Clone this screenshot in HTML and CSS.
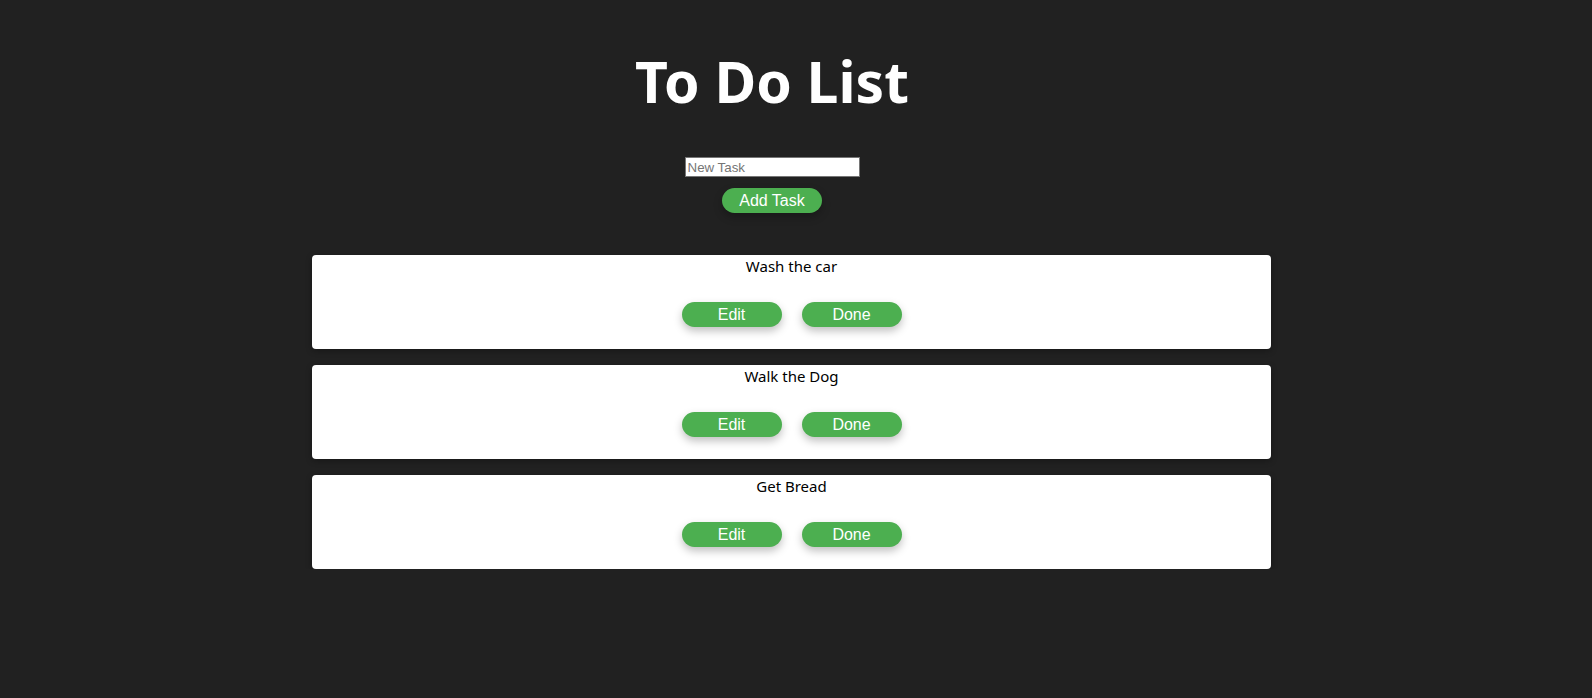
FILE: index.html
```html
<!DOCTYPE html>
<html>
<head>
<meta charset="utf-8">
<link rel="stylesheet" href="styles.css">
</head>
<body>
<header class="header">
  <h1 class="title">To Do List</h1>
  <form class="add-form">
    <input class="task-input" type="text" placeholder="New Task">
    <button class="btn" type="button">Add Task</button>
  </form>
</header>
<main class="list">
  <div class="card">
    <p class="card-text">Wash the car</p>
    <div class="card-actions"><button class="btn">Edit</button><button class="btn">Done</button></div>
  </div>
  <div class="card">
    <p class="card-text">Walk the Dog</p>
    <div class="card-actions"><button class="btn">Edit</button><button class="btn">Done</button></div>
  </div>
  <div class="card">
    <p class="card-text">Get Bread</p>
    <div class="card-actions"><button class="btn">Edit</button><button class="btn">Done</button></div>
  </div>
</main>
</body>
</html>
```

FILE: styles.css
```css
html, body {
  margin: 0;
  padding: 0;
  background: #212121;
  font-family: "Noto Sans", "Open Sans", sans-serif;
}
.header {
  display: flex;
  flex-direction: column;
  align-items: center;
  padding-right: 48px;
  padding-top: 41px;
}
.title {
  margin: 0;
  color: #fff;
  font-family: "Noto Sans", sans-serif;
  font-weight: 700;
  font-size: 57px;
  line-height: 80px;
}
.add-form {
  display: flex;
  flex-direction: column;
  align-items: center;
  margin-top: 36px;
  gap: 11px;
}
.task-input {
  box-sizing: border-box;
  width: 175px;
  height: 20px;
  margin: 0;
  border: 1px solid #767676;
  border-radius: 0;
  padding: 1px 2px;
  font-family: "Liberation Sans", Arial, sans-serif;
  font-size: 13.33px;
  background: #fff;
}
.task-input::placeholder { color: #757575; }
.btn {
  box-sizing: border-box;
  width: 100px;
  height: 25px;
  margin: 0;
  padding: 0;
  border: none;
  border-radius: 13px;
  background: #4caf50;
  color: #fff;
  font-family: "Liberation Sans", Arial, sans-serif;
  font-size: 16px;
  box-shadow: 0 4px 8px rgba(0,0,0,0.25);
}
.list {
  display: flex;
  flex-direction: column;
  align-items: center;
  gap: 16px;
  margin-top: 42px;
}
.card {
  box-sizing: border-box;
  width: 959px;
  height: 94px;
  margin-right: 9px;
  background: #fff;
  border-radius: 4px;
  box-shadow: 0 2px 6px rgba(0,0,0,0.3);
  display: flex;
  flex-direction: column;
  align-items: center;
}
.card-text {
  margin: 0;
  color: #000;
  font-size: 15px;
  line-height: 22px;
}
.card-actions {
  display: flex;
  gap: 20px;
  margin-top: 25px;
}
```
